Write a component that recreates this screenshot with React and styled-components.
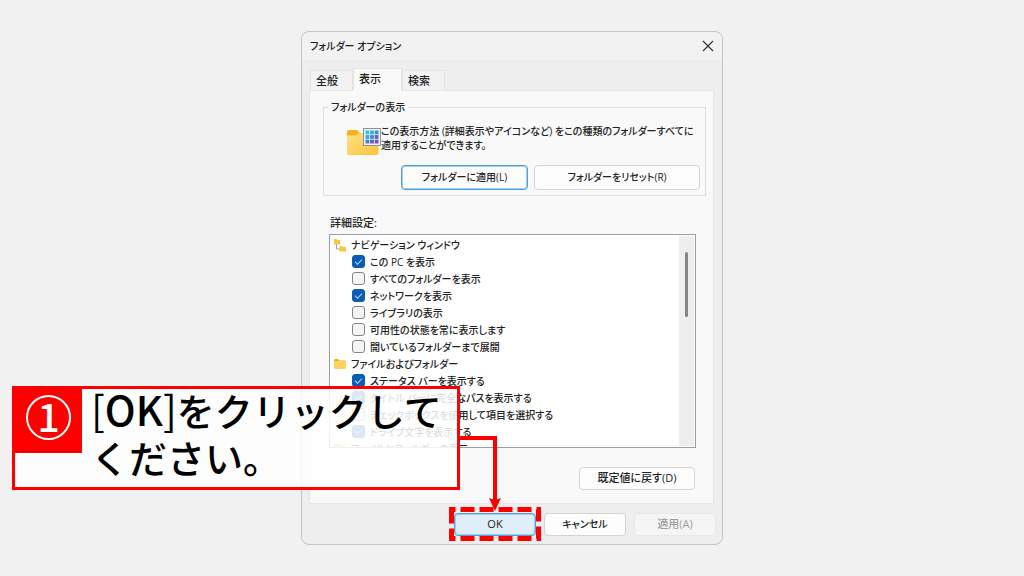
import React from "react";
import styled, { createGlobalStyle } from "styled-components";

const Global = createGlobalStyle`
  * { box-sizing: border-box; }
  body {
    margin: 0;
    background: #f1f1f1;
    color: #222;
    font-family: "Open Sans", "Noto Sans CJK JP", sans-serif;
    font-size: 10px;
    font-weight: 500;
    line-height: 14px;
    font-feature-settings: "palt";
  }
  button, input { font: inherit; font-feature-settings: inherit; color: inherit; margin: 0; }
`;

const Screen = styled.main`
  display: flex;
  justify-content: center;
  align-items: flex-start;
  min-height: 100vh;
  padding: 31px 16px;
`;

const Dialog = styled.section`
  position: relative;
  flex: 0 1 422px;
  background: #eee;
  border: 1px solid #c4c4c4;
  border-radius: 8px;
`;

const TitleBar = styled.header`
  display: flex;
  justify-content: space-between;
  align-items: center;
  height: 28px;
  padding: 0 7px 0 8px;
  background: #f2f2f2;
  border-radius: 8px 8px 0 0;
`;

const Title = styled.h1`
  margin: 0;
  font-size: 10px;
  font-weight: 500;
`;

const CloseButton = styled.button`
  display: flex;
  padding: 1px;
  border: 0;
  background: none;
`;

const Tabs = styled.div`
  display: flex;
  align-items: flex-end;
  padding: 8px 8px 0;
`;

const Tab = styled.button`
  width: ${(p) => (p.$active ? 49 : 43)}px;
  height: ${(p) => (p.$active ? 23 : 20)}px;
  padding: 0 5px ${(p) => (p.$active ? 3 : 0)}px;
  margin-bottom: ${(p) => (p.$active ? -1 : 0)}px;
  font-size: 11px;
  text-align: left;
  border: 1px solid #e4e4e4;
  border-bottom: 0;
  background: ${(p) => (p.$active ? "#f9f9f9" : "#f2f2f2")};
`;

const Pane = styled.div`
  margin: 0 8px 0 7px;
  padding: 9px 7px 13px 13px;
  background: #f9f9f9;
  border: 1px solid #e6e6e6;
`;

const Group = styled.fieldset`
  margin: 0;
  padding: 9px 5px 5px 23px;
  border: 1px solid #dfdfdf;
`;

const Legend = styled.legend`
  margin-left: -19px;
  padding: 0 3px;
`;

const Intro = styled.div`
  display: flex;
  svg { flex: none; }
  p { margin: 1px 0 0; white-space: nowrap; }
`;

const Buttons = styled.div`
  display: flex;
  justify-content: flex-end;
  gap: ${(p) => p.$gap || 6}px;
  padding: ${(p) => p.$pad || 0};
`;

const Button = styled.button`
  width: ${(p) => p.$w}px;
  height: ${(p) => p.$h || 23}px;
  padding: 0 0 1px;
  font-size: ${(p) => (p.$large ? 11 : 10)}px;
  border: 1px solid ${(p) => (p.$accent ? "#4a9fe0" : "#d4d4d4")};
  border-radius: 4px;
  background: ${(p) => (p.$filled ? "#e0eef9" : "#fdfdfd")};
  box-shadow: ${(p) => (p.$accent ? "inset 0 0 0 1px #a5cff0" : "none")};
  &:disabled { color: #9d9d9d; background: #f5f5f5; border-color: #e8e8e8; }
`;

const ListLabel = styled.h2`
  margin: 20px 7px 4px;
  font-size: 11px;
  font-weight: 500;
`;

const ListBox = styled.div`
  display: flex;
  justify-content: space-between;
  height: 214px;
  margin: 0 10px 19px 6px;
  padding: 1px;
  overflow: hidden;
  background: #fff;
  border: 1px solid #9b9ea6;
`;

const Items = styled.ul`
  margin: 0;
  padding: 0;
  list-style: none;
`;

const Item = styled.li`
  display: flex;
  align-items: center;
  gap: 5px;
  height: 17px;
  padding-left: ${(p) => (p.$child ? 21 : 3)}px;
  white-space: nowrap;
  label { display: flex; align-items: center; gap: 5px; }
`;

const Check = styled.input`
  appearance: none;
  width: 13px;
  height: 13px;
  border: 1px solid #858585;
  border-radius: 3px;
  background: #f5f5f5;
  &:checked {
    border-color: #0a5cb4;
    background: #0a5cb4;
  }
  &:checked::before {
    content: "";
    display: block;
    width: 6px;
    height: 3px;
    margin: 3px 2px;
    border: solid #b4d2ee;
    border-width: 0 0 1px 1px;
    transform: rotate(-45deg);
  }
`;

const Track = styled.div`
  width: 15px;
  padding: 16px 6px 0;
  background: #eee;
`;

const Thumb = styled.div`
  width: 3px;
  height: 65px;
  border-radius: 2px;
  background: #868686;
`;

const Callout = styled.aside`
  position: absolute;
  left: -290px;
  top: 354px;
  width: 448px;
  height: 104px;
  display: flex;
  align-items: flex-start;
  border: 3px solid #f00;
  background: rgba(255, 255, 255, 0.85);
`;

const Step = styled.div`
  display: flex;
  justify-content: center;
  width: 67px;
  height: 64px;
  padding: 6px 0 0;
  background: #f00;
`;

const StepNumber = styled.span`
  width: 45px;
  height: 45px;
  border: 2px solid #fff;
  border-radius: 50%;
  color: #fff;
  font: 500 39px/37px "Noto Sans CJK JP", sans-serif;
  text-align: center;
`;

const Message = styled.p`
  margin: -3px 0 0;
  padding: 0 0 0 9px;
  color: #000;
  font: 500 38px/47px "Noto Sans CJK JP", sans-serif;
  font-feature-settings: normal;
  white-space: nowrap;
`;

const KeyName = styled.span`
  font-size: 41px;
  line-height: 40px;
  span { font-weight: 400; }
`;

const Pointer = styled.svg`
  position: absolute;
  left: 147px;
  top: 398px;
  pointer-events: none;
`;

function FolderIcon() {
  return (
    <svg width="12" height="12" viewBox="0 0 12 12" aria-hidden="true">
      <path d="M0 2.200Q0 1 1.200 1H4l1.500 1.500H11q1 0 1 1V5H0z" fill="#f0ab1c" />
      <rect y="3" width="12" height="8" rx="1" fill="#ffd35e" />
    </svg>
  );
}

function TreeIcon() {
  return (
    <svg width="12" height="14" viewBox="0 0 12 14" aria-hidden="true">
      <path d="M2.500 6v5H6" fill="none" stroke="#9aa3ab" />
      <path d="M0 1h2.500l1 1H6v4.500H0z" fill="#fcc63c" />
      <path d="M5.500 8H8l1 1h3v4.500H5.500z" fill="#fcc63c" />
    </svg>
  );
}

function ViewIcon() {
  const tones = ["#35c4dc", "#33aee0", "#3a8fd8", "#3aa6dc", "#4385cf", "#5068c4", "#4680cc", "#5d60bd", "#7450b0"];
  return (
    <svg width="34" height="32" viewBox="0 0 34 32" aria-hidden="true">
      <defs>
        <linearGradient id="folder" x1="0" y1="0" x2="1" y2="1">
          <stop offset="0" stopColor="#ffe08a" />
          <stop offset="1" stopColor="#fbc437" />
        </linearGradient>
      </defs>
      <path d="M0 9q0-2 2-2h8l3 3v5H0z" fill="#f8b31c" />
      <path d="M0 12.500h9l3-2.500h17.500q2 0 2 2v18q0 2-2 2H2q-2 0-2-2z" fill="url(#folder)" />
      <rect x="16.500" y="5.500" width="17" height="17" fill="#eef4f8" stroke="#8d9499" />
      {tones.map((c, i) => (
        <rect key={i} x={18.5 + (i % 3) * 4.6} y={7.5 + Math.floor(i / 3) * 4.6} width="3.800" height="3.800" fill={c} />
      ))}
    </svg>
  );
}

const entries = [
  { icon: TreeIcon, text: "ナビゲーション ウィンドウ" },
  { text: "この PC を表示", on: true },
  { text: "すべてのフォルダーを表示" },
  { text: "ネットワークを表示", on: true },
  { text: "ライブラリの表示" },
  { text: "可用性の状態を常に表示します" },
  { text: "開いているフォルダーまで展開" },
  { icon: FolderIcon, text: "ファイルおよびフォルダー" },
  { text: "ステータス バーを表示する", on: true },
  { text: "タイトル バーに完全なパスを表示する", on: true },
  { text: "チェックボックスを使用して項目を選択する" },
  { text: "ドライブ文字を表示する", on: true },
  { icon: FolderIcon, text: "ファイルとフォルダーの表示" },
];

export default function App() {
  return (
    <Screen>
      <Global />
      <Dialog aria-label="フォルダー オプション">
        <TitleBar>
          <Title>フォルダー オプション</Title>
          <CloseButton aria-label="閉じる">
            <svg width="12" height="12" viewBox="0 0 12 12">
              <path d="M1 1l10 10M11 1L1 11" stroke="#333" strokeWidth="1.200" />
            </svg>
          </CloseButton>
        </TitleBar>
        <Tabs role="tablist">
          <Tab role="tab" aria-selected="false">全般</Tab>
          <Tab role="tab" aria-selected="true" $active>表示</Tab>
          <Tab role="tab" aria-selected="false">検索</Tab>
        </Tabs>
        <Pane role="tabpanel">
          <Group>
            <Legend>フォルダーの表示</Legend>
            <Intro>
              <ViewIcon />
              <p>
                この表示方法 (詳細表示やアイコンなど) をこの種類のフォルダーすべてに
                <br />
                適用することができます。
              </p>
            </Intro>
            <Buttons $pad="10px 0 0">
              <Button $w={127} $h={25} $accent>フォルダーに適用(L)</Button>
              <Button $w={166} $h={25}>フォルダーをリセット(R)</Button>
            </Buttons>
          </Group>
          <ListLabel>詳細設定:</ListLabel>
          <ListBox>
            <Items>
              {entries.map(({ icon: Icon, text, on }) => (
                <Item key={text} $child={!Icon}>
                  {Icon ? (
                    <><Icon />{text}</>
                  ) : (
                    <label><Check type="checkbox" defaultChecked={on} />{text}</label>
                  )}
                </Item>
              ))}
            </Items>
            <Track><Thumb /></Track>
          </ListBox>
          <Buttons $pad="0 11px 0 0">
            <Button $w={116} $large>既定値に戻す(D)</Button>
          </Buttons>
        </Pane>
        <Buttons $gap={8} $pad="9px 6px 8px">
          <Button $w={82} $accent $filled $large>OK</Button>
          <Button $w={82}>キャンセル</Button>
          <Button $w={82} $large disabled>適用(A)</Button>
        </Buttons>
        <Callout>
          <Step><StepNumber>1</StepNumber></Step>
          <Message>
            <KeyName><span>[</span>OK<span>]</span></KeyName>をクリックして<br />ください。
          </Message>
        </Callout>
        <Pointer width="94" height="112" viewBox="0 0 94 112" aria-hidden="true">
          <path d="M10 8H46V71" fill="none" stroke="#f00" strokeWidth="4" />
          <path d="M40 68l6 2 6-2-6 13z" fill="#f00" />
          <rect x="2.500" y="79.500" width="87" height="29" fill="none" stroke="#f00" strokeWidth="5" strokeDasharray="14 5" strokeDashoffset="10" />
        </Pointer>
      </Dialog>
    </Screen>
  );
}
